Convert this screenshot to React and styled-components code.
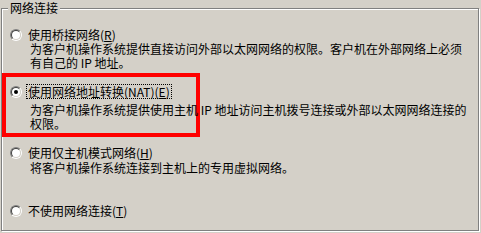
import React from "react";
import styled, { createGlobalStyle } from "styled-components";

const GlobalStyle = createGlobalStyle`
    html, body {
        margin: 0;
        padding: 0;
        background: #d4d0c8;
    }
    body {
        font-family: "Noto Sans CJK SC", "DejaVu Sans", sans-serif;
        font-size: 12px;
        color: #000;
    }
`;

const Page = styled.div`
    width: 481px;
    height: 233px;
    overflow: hidden;
`;

const Group = styled.div`
    box-sizing: border-box;
    margin: 8px 0 0 1px;
    width: 478px;
    height: 223px;
    border: 1px solid #808080;
    box-shadow: inset 1px 1px 0 #fff, 1px 1px 0 #fff;
    display: flex;
    flex-direction: column;
    align-items: flex-start;
`;

const Legend = styled.div`
    margin: -9px 0 0 6px;
    padding: 0 2px;
    background: #d4d0c8;
    line-height: 15px;
    white-space: nowrap;
`;

const Choice = styled.div`
    box-sizing: border-box;
    width: 198px;
    margin-top: ${({ $gap }) => $gap}px;
    padding: ${({ $highlight }) => ($highlight ? "7px 0 0 0" : "0 0 0 4px")};
    border: ${({ $highlight }) => ($highlight ? "4px solid #ff0000" : "none")};
    white-space: nowrap;
`;

const Row = styled.div`
    display: flex;
    align-items: center;
    height: 15px;
`;

const Radio = styled.span`
    position: relative;
    box-sizing: border-box;
    flex: none;
    width: 12px;
    height: 12px;
    margin-left: 4px;
    border-radius: 50%;
    border: 1px solid;
    border-color: #808080 #fff #fff #808080;
    &::before {
        content: "";
        position: absolute;
        inset: 0;
        border-radius: 50%;
        border: 1px solid;
        border-color: #404040 #d4d0c8 #d4d0c8 #404040;
        background: #fff;
    }
    &::after {
        content: "";
        display: ${({ $checked }) => ($checked ? "block" : "none")};
        position: absolute;
        left: 3px;
        top: 3px;
        width: 4px;
        height: 4px;
        border-radius: 50%;
        background: #000;
    }
`;

const Label = styled.span`
    margin-left: 4px;
    padding: 0 1px;
    line-height: 13px;
    border: 1px dotted ${({ $focused }) => ($focused ? "#000" : "transparent")};
    u {
        text-decoration: underline;
        text-underline-offset: 1px;
    }
`;

const Desc = styled.div`
    margin: ${({ $gap }) => $gap || 0}px 0 0 24px;
    line-height: 14px;
`;

const options = [
    {
        label: "使用桥接网络",
        key: "R",
        gap: 12,
        lines: [
            "为客户机操作系统提供直接访问外部以太网网络的权限。客户机在外部网络上必须",
            "有自己的 IP 地址。",
        ],
    },
    {
        label: "使用网络地址转换(NAT)",
        key: "E",
        gap: 3,
        checked: true,
        highlight: true,
        height: 64,
        descGap: 4,
        lines: [
            "为客户机操作系统提供使用主机 IP 地址访问主机拨号连接或外部以太网网络连接的",
            "权限。",
        ],
    },
    {
        label: "使用仅主机模式网络",
        key: "H",
        gap: 8,
        descGap: 1,
        lines: ["将客户机操作系统连接到主机上的专用虚拟网络。"],
    },
    {
        label: "不使用网络连接",
        key: "T",
        gap: 28,
        lines: [],
    },
];

const App = () => {
    return (
        <Page>
            <GlobalStyle />
            <Group>
                <Legend>网络连接</Legend>
                {options.map((opt) => (
                    <Choice
                        key={opt.key}
                        $gap={opt.gap}
                        $highlight={opt.highlight}
                        style={opt.height ? { height: opt.height } : undefined}
                    >
                        <Row>
                            <Radio $checked={opt.checked} />
                            <Label $focused={opt.checked}>
                                {opt.label}(<u>{opt.key}</u>)
                            </Label>
                        </Row>
                        {opt.lines.map((line, i) => (
                            <Desc key={i} $gap={i === 0 ? opt.descGap : 0}>
                                {line}
                            </Desc>
                        ))}
                    </Choice>
                ))}
            </Group>
        </Page>
    );
};

export default App;
